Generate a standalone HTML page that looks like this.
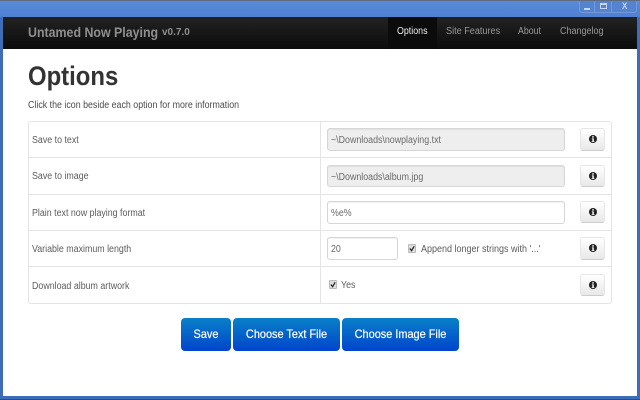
<!DOCTYPE html>
<html><head><meta charset="utf-8"><style>
html,body{margin:0;padding:0;background:#fff}
body{width:640px;height:400px;position:relative;overflow:hidden;font-family:"Liberation Sans",sans-serif;color:#555}
div,span{position:absolute;box-sizing:border-box;white-space:nowrap}
span{transform:scaleX(.885);transform-origin:0 50%}
.lbl{left:32px;font-size:10px;line-height:12px;color:#5c5c5c}
.inp{left:327px;width:238px;border:1px solid #d6d6d6;border-radius:3px;font-size:10px;color:#6a6a6a;box-shadow:inset 0 1px 1px rgba(0,0,0,.06)}
.inp span{left:3px;top:1px}
.dis{background:#eee}
.ib{left:580px;width:25px;border:1px solid #e6e6e6;border-bottom-color:#ccc;border-radius:3px;background:linear-gradient(#fff,#e8e8e8)}
.ib svg{position:absolute;left:7px;top:50%;margin-top:-5.5px}
.hl{left:28px;width:584px;height:1px;background:#e4e4e4}
.nav{top:17px;height:32px;line-height:30px;font-size:10px;color:#999}
.b{top:318px;height:33px;line-height:33px;border-radius:4px;background:linear-gradient(#0a80c8,#0044cc);color:#fff;font-size:12px;text-align:center;-webkit-text-stroke:.2px #fff}
.b span{left:0;top:0;width:100%;transform:scaleX(.91);transform-origin:50% 50%}
.chk{width:8px;height:9px;background:#ddd;border:1px solid #bbb;border-radius:1px}
.chk svg{position:absolute;left:0;top:0}
</style></head><body>
<div style="left:0;top:0;width:640px;height:400px;background:#3f6cb8"></div>
<div style="left:0;top:0;width:640px;height:1px;background:#5f6b80"></div>
<div style="left:0;top:1px;width:640px;height:16px;background:linear-gradient(#5a8ad8,#4f80d2)"></div>
<div style="left:3px;top:17px;width:634px;height:379px;background:#fff"></div>
<div style="left:0;top:399px;width:640px;height:1px;background:#3d4a60"></div>

<div style="left:579px;top:1px;width:58px;height:12px;background:#5484d0;border:1px solid #7199d8;border-top:0;border-radius:0 0 3px 3px"></div>
<div style="left:594px;top:1px;width:1px;height:12px;background:#7199d8"></div>
<div style="left:611px;top:1px;width:1px;height:12px;background:#7199d8"></div>
<div style="left:584px;top:8px;width:6px;height:2px;background:#c8d6ec"></div>
<div style="left:600px;top:3px;width:7px;height:6px;border:1px solid #c8d6ec;border-top-width:2px"></div>
<span style="left:622px;top:1px;font-size:9px;font-weight:700;line-height:11px;color:#c8d6ec">X</span>

<div style="left:3px;top:17px;width:634px;height:32px;background:linear-gradient(#222,#0c0c0c)"></div>
<div style="left:388px;top:17px;width:49px;height:32px;background:#0b0b0b"></div>
<span style="left:28px;top:24px;font-size:14px;line-height:16px;font-weight:700;color:#8f8f8f">Untamed Now Playing</span>
<span style="left:162px;top:26px;font-size:10px;line-height:14px;font-weight:700;color:#8f8f8f;transform:none">v0.7.0</span>
<span class="nav" style="left:397px;color:#eee">Options</span>
<span class="nav" style="left:446px;transform:scaleX(.91)">Site Features</span>
<span class="nav" style="left:518px;transform:scaleX(.88)">About</span>
<span class="nav" style="left:560px;transform:scaleX(.9)">Changelog</span>

<span style="left:28px;top:60px;font-size:27px;line-height:33px;font-weight:700;color:#333">Options</span>
<span style="left:28px;top:100px;font-size:10px;line-height:12px;color:#4a4a4a">Click the icon beside each option for more information</span>

<div style="left:28px;top:121px;width:584px;height:183px;border:1px solid #e4e4e4;border-radius:3px"></div>
<div style="left:320px;top:122px;width:1px;height:181px;background:#e4e4e4"></div>
<div class="hl" style="top:157px"></div>
<div class="hl" style="top:194px"></div>
<div class="hl" style="top:230px"></div>
<div class="hl" style="top:266px"></div>

<span class="lbl" style="top:135px">Save to text</span>
<span class="lbl" style="top:171px">Save to image</span>
<span class="lbl" style="top:208px">Plain text now playing format</span>
<span class="lbl" style="top:244px">Variable maximum length</span>
<span class="lbl" style="top:281px">Download album artwork</span>

<div class="inp dis" style="top:128px;height:23px;line-height:21px"><span>~\Downloads\nowplaying.txt</span></div>
<div class="inp dis" style="top:165px;height:22px;line-height:20px"><span style="top:2px">~\Downloads\album.jpg</span></div>
<div class="inp" style="top:201px;height:23px;line-height:21px"><span>%e%</span></div>
<div class="inp" style="top:237px;width:71px;height:23px;line-height:21px"><span>20</span></div>

<div class="chk" style="left:408px;top:244px"><svg width="6" height="7" viewBox="0 0 7 7"><path d="M1 3.5L3 6L6 1" fill="none" stroke="#222" stroke-width="1.4"/></svg></div>
<span class="lbl" style="left:421px;top:244px;transform:scaleX(.9)">Append longer strings with '...'</span>
<div class="chk" style="left:329px;top:280px"><svg width="6" height="7" viewBox="0 0 7 7"><path d="M1 3.5L3 6L6 1" fill="none" stroke="#222" stroke-width="1.4"/></svg></div>
<span class="lbl" style="left:341px;top:280px">Yes</span>

<div class="ib" style="top:128px;height:23px"><svg width="10" height="10" viewBox="0 0 10 10"><circle cx="5" cy="5" r="4" fill="#222"/><rect x="4.2" y="2.2" width="1.6" height="1.4" fill="#fff"/><path d="M3.8 4.4H5.8V7H6.4V7.9H3.7V7H4.4V5.2H3.8Z" fill="#fff"/></svg></div>
<div class="ib" style="top:165px;height:22px"><svg width="10" height="10" viewBox="0 0 10 10"><circle cx="5" cy="5" r="4" fill="#222"/><rect x="4.2" y="2.2" width="1.6" height="1.4" fill="#fff"/><path d="M3.8 4.4H5.8V7H6.4V7.9H3.7V7H4.4V5.2H3.8Z" fill="#fff"/></svg></div>
<div class="ib" style="top:201px;height:22px"><svg width="10" height="10" viewBox="0 0 10 10"><circle cx="5" cy="5" r="4" fill="#222"/><rect x="4.2" y="2.2" width="1.6" height="1.4" fill="#fff"/><path d="M3.8 4.4H5.8V7H6.4V7.9H3.7V7H4.4V5.2H3.8Z" fill="#fff"/></svg></div>
<div class="ib" style="top:237px;height:23px"><svg width="10" height="10" viewBox="0 0 10 10"><circle cx="5" cy="5" r="4" fill="#222"/><rect x="4.2" y="2.2" width="1.6" height="1.4" fill="#fff"/><path d="M3.8 4.4H5.8V7H6.4V7.9H3.7V7H4.4V5.2H3.8Z" fill="#fff"/></svg></div>
<div class="ib" style="top:274px;height:22px"><svg width="10" height="10" viewBox="0 0 10 10"><circle cx="5" cy="5" r="4" fill="#222"/><rect x="4.2" y="2.2" width="1.6" height="1.4" fill="#fff"/><path d="M3.8 4.4H5.8V7H6.4V7.9H3.7V7H4.4V5.2H3.8Z" fill="#fff"/></svg></div>

<div class="b" style="left:181px;width:50px"><span>Save</span></div>
<div class="b" style="left:233px;width:107px"><span>Choose Text File</span></div>
<div class="b" style="left:342px;width:117px"><span>Choose Image File</span></div>
</body></html>
